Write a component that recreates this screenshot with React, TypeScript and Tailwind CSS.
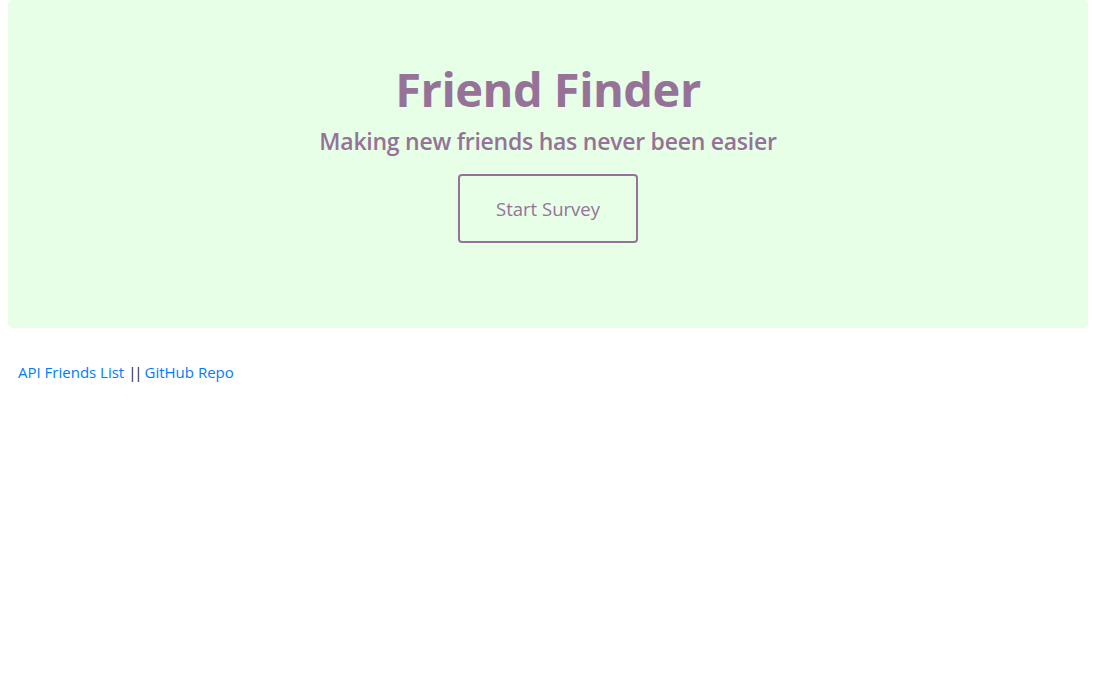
import React from "react";

export default function App() {
  return (
    <div className="min-h-screen bg-white" style={{ fontFamily: '"Open Sans", "Noto Sans", sans-serif' }}>
      <div className="pl-[8px] pr-[14px]">
        <div className="rounded-[5px] bg-[#e6ffe6] pt-[61px] pb-[85px] flex flex-col items-center text-[#967299]">
          <h1 className="text-[47px] leading-[57px] font-bold tracking-[-0.5px]">Friend Finder</h1>
          <h4 className="mt-[9px] text-[23px] leading-[29px] font-semibold tracking-[-0.25px]">Making new friends has never been easier</h4>
          <button className="mt-[18px] w-[180px] h-[69px] border-2 border-[#967299] rounded-[4px] text-[18.5px] text-[#967299] bg-transparent">
            Start Survey
          </button>
        </div>
      </div>
      <div className="mt-[32px] px-[18px] text-[15px] leading-[24px] text-[#212529]">
        <a href="#" className="text-[#007bff]">API Friends List</a> <span className="tracking-[-2px]">||</span> <a href="#" className="text-[#007bff]">GitHub Repo</a>
      </div>
    </div>
  );
}
